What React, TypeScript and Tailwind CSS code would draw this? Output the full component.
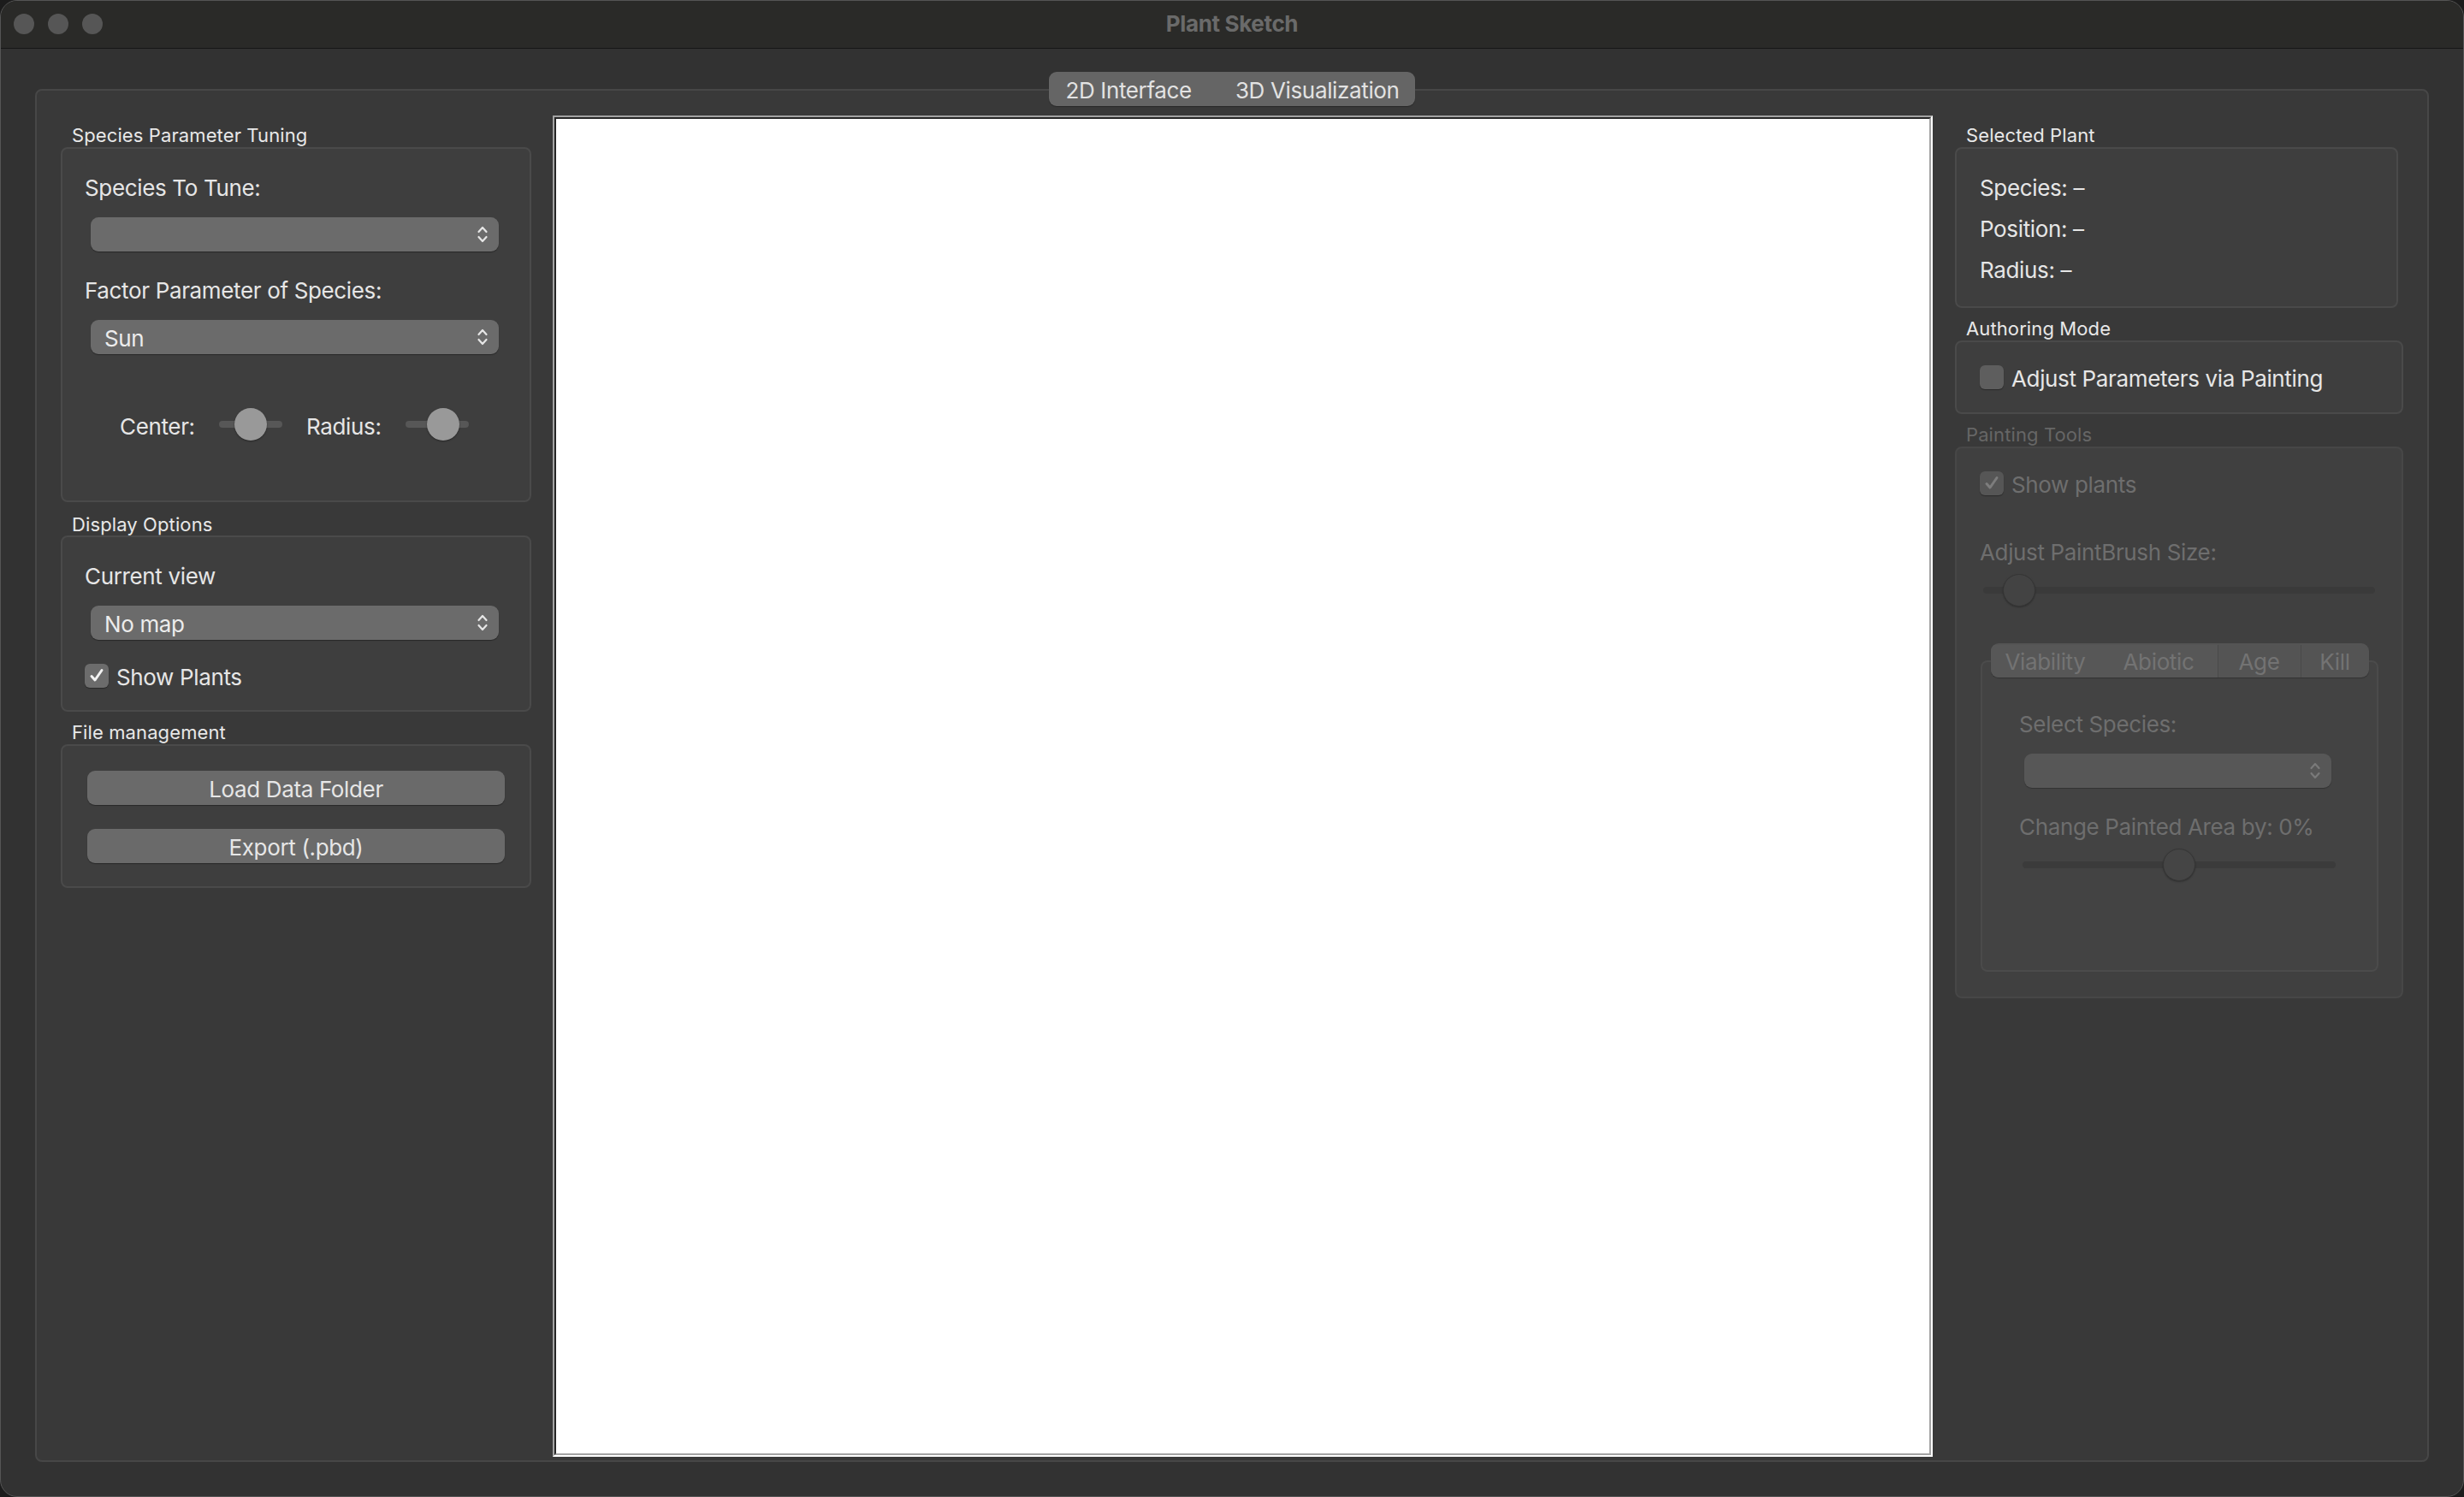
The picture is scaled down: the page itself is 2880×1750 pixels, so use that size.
import React from "react";

function Chevrons({ dim }: { dim?: boolean }) {
    return (
        <svg width="14" height="26" viewBox="0 0 14 26" fill="none">
            <path
                d="M2.5 10 L7 5 L11.5 10"
                stroke={dim ? "#7a7a7a" : "#e6e6e6"}
                strokeWidth="2.2"
                strokeLinecap="round"
                strokeLinejoin="round"
            />
            <path
                d="M2.5 16 L7 21 L11.5 16"
                stroke={dim ? "#7a7a7a" : "#e6e6e6"}
                strokeWidth="2.2"
                strokeLinecap="round"
                strokeLinejoin="round"
            />
        </svg>
    );
}

function Combo({
    value,
    className = "",
    disabled,
}: {
    value?: string;
    className?: string;
    disabled?: boolean;
}) {
    return (
        <div
            className={`flex h-[40px] items-center justify-between rounded-[9px] pl-[16px] pr-[12px] ${
                disabled
                    ? "bg-[#575757] shadow-[0_1px_1px_rgba(0,0,0,0.25)]"
                    : "bg-[#6b6b6b] shadow-[0_1px_1px_rgba(0,0,0,0.35)]"
            } ${className}`}
        >
            <span className="pt-[3px] text-[26px] leading-none text-[#ececec]">
                {value}
            </span>
            <Chevrons dim={disabled} />
        </div>
    );
}

function Checkbox({
    checked,
    disabled,
}: {
    checked?: boolean;
    disabled?: boolean;
}) {
    const bg = disabled
        ? "bg-[#565656]"
        : checked
          ? "bg-[#6c6c6c]"
          : "bg-[#5e5e5e]";
    return (
        <div
            className={`flex h-[28px] w-[28px] shrink-0 items-center justify-center rounded-[6px] ${bg} shadow-[0_1px_1px_rgba(0,0,0,0.35)]`}
        >
            {checked && (
                <svg width="20" height="20" viewBox="0 0 20 20" fill="none">
                    <path
                        d="M4 10.5 L8 15 L16 3.5"
                        stroke={disabled ? "#7d7d7d" : "#f2f2f2"}
                        strokeWidth="3"
                        strokeLinecap="round"
                        strokeLinejoin="round"
                    />
                </svg>
            )}
        </div>
    );
}

function GroupTitle({
    children,
    dim,
    className = "",
}: {
    children: React.ReactNode;
    dim?: boolean;
    className?: string;
}) {
    return (
        <div
            className={`h-[28px] pl-[13px] text-[22px] leading-[32px] tracking-[0.005em] ${
                dim ? "text-[#666666]" : "text-[#e8e8e8]"
            } ${className}`}
        >
            {children}
        </div>
    );
}

function Label({
    children,
    dim,
    className = "",
}: {
    children: React.ReactNode;
    dim?: boolean;
    className?: string;
}) {
    return (
        <div
            className={`h-[32px] text-[26px] leading-[35px] ${
                dim ? "text-[#6e6e6e]" : "text-[#e6e6e6]"
            } ${className}`}
        >
            {children}
        </div>
    );
}

function PushButton({ children }: { children: React.ReactNode }) {
    return (
        <div className="ml-[3px] flex h-[40px] w-[488px] items-center justify-center rounded-[9px] bg-[#6a6a6a] pt-[2px] text-[26px] text-[#e6e6e6] shadow-[0_1px_1px_rgba(0,0,0,0.35)]">
            {children}
        </div>
    );
}

export default function App() {
    return (
        <div className="h-[1750px] w-[2880px] bg-[#1c1c1c] [font-family:Inter,'Liberation_Sans',sans-serif] tracking-[-0.022em]">
            <div className="flex h-full w-full flex-col overflow-hidden rounded-[20px] border border-[#555555] bg-[#323232]">
                {/* title bar */}
                <div className="relative flex h-[56px] shrink-0 items-center justify-center border-b border-[#161616] bg-[#2a2a28]">
                    <div className="absolute left-[15px] top-[15px] flex gap-[16px]">
                        <div className="h-[24px] w-[24px] rounded-full bg-[#565656]" />
                        <div className="h-[24px] w-[24px] rounded-full bg-[#565656]" />
                        <div className="h-[24px] w-[24px] rounded-full bg-[#565656]" />
                    </div>
                    <span className="-mt-[2px] text-[26px] font-bold text-[#6a6a6a]">
                        Plant Sketch
                    </span>
                </div>

                {/* tab widget */}
                <div className="flex flex-1 flex-col px-[40px] pb-[40px]">
                    <div className="relative z-10 mt-[27px] flex justify-center">
                        <div className="flex h-[40px] items-center gap-[51px] rounded-[9px] bg-[#656565] pl-[19px] pr-[18px] pt-[2px] text-[26px] text-[#e2e2e2] shadow-[0_1px_1px_rgba(0,0,0,0.3)]">
                            <span>2D Interface</span>
                            <span>3D Visualization</span>
                        </div>
                    </div>
                    <div className="-mt-[20px] flex flex-1 items-start rounded-[8px] border-2 border-[#474747] bg-[#393939] pl-[28px] pr-[29px] pt-[29px] pb-[4px]">
                        {/* left column */}
                        <div className="flex w-[550px] shrink-0 flex-col">
                            <GroupTitle className="mt-[7px]">
                                Species Parameter Tuning
                            </GroupTitle>
                            <div className="mt-[2px] flex h-[415px] flex-col rounded-[8px] border-2 border-[#4a4a4a] bg-[#3e3e3e] pl-[26px] pt-[28px]">
                                <Label>Species To Tune:</Label>
                                <Combo className="ml-[7px] mt-[20px] w-[477px]" />
                                <Label className="mt-[28px]">
                                    Factor Parameter of Species:
                                </Label>
                                <Combo
                                    value="Sun"
                                    className="ml-[7px] mt-[20px] w-[477px]"
                                />
                                <div className="ml-[41px] mt-[62px] flex h-[40px] items-center text-[26px] text-[#e6e6e6]">
                                    <span className="w-[116px] pt-[4px]">
                                        Center:
                                    </span>
                                    <div className="relative flex h-[40px] w-[74px] items-center">
                                        <div className="h-[8px] w-full rounded-full bg-[#575757]" />
                                        <div className="absolute left-[18px] top-[1px] h-[38px] w-[38px] rounded-full bg-[#999999] shadow-[0_1px_2px_rgba(0,0,0,0.4)]" />
                                    </div>
                                    <span className="ml-[28px] w-[116px] pt-[4px]">
                                        Radius:
                                    </span>
                                    <div className="relative flex h-[40px] w-[74px] items-center">
                                        <div className="h-[8px] w-full rounded-full bg-[#575757]" />
                                        <div className="absolute left-[25px] top-[1px] h-[38px] w-[38px] rounded-full bg-[#999999] shadow-[0_1px_2px_rgba(0,0,0,0.4)]" />
                                    </div>
                                </div>
                            </div>

                            <GroupTitle className="mt-[10px]">
                                Display Options
                            </GroupTitle>
                            <div className="mt-[1px] flex h-[206px] flex-col rounded-[8px] border-2 border-[#4a4a4a] bg-[#3e3e3e] pl-[26px] pt-[28px]">
                                <Label>Current view</Label>
                                <Combo
                                    value="No map"
                                    className="ml-[7px] mt-[20px] w-[477px]"
                                />
                                <div className="mt-[28px] flex h-[28px] items-center gap-[9px] text-[26px] text-[#e6e6e6]">
                                    <Checkbox checked />
                                    <span className="pt-[3px]">
                                        Show Plants
                                    </span>
                                </div>
                            </div>

                            <GroupTitle className="mt-[8px]">
                                File management
                            </GroupTitle>
                            <div className="mt-[2px] flex h-[168px] flex-col rounded-[8px] border-2 border-[#4a4a4a] bg-[#3e3e3e] pl-[26px] pt-[29px]">
                                <PushButton>Load Data Folder</PushButton>
                                <div className="mt-[28px]">
                                    <PushButton>Export (.pbd)</PushButton>
                                </div>
                            </div>
                        </div>

                        {/* canvas */}
                        <div className="ml-[25px] flex w-[1613px] shrink-0 self-stretch border-2 border-b-white border-l-[#a3a3a3] border-r-white border-t-[#a3a3a3]">
                            <div className="flex-1 border-2 border-b-[#a3a3a3] border-l-[#262626] border-r-[#a3a3a3] border-t-[#262626] bg-white" />
                        </div>

                        {/* right column */}
                        <div className="ml-[26px] flex w-[524px] shrink-0 flex-col">
                            <GroupTitle className="mt-[7px]">
                                Selected Plant
                            </GroupTitle>
                            <div className="mt-[2px] flex h-[188px] w-[518px] flex-col gap-[16px] rounded-[8px] border-2 border-[#4a4a4a] bg-[#3e3e3e] pl-[27px] pt-[28px]">
                                <Label>Species: –</Label>
                                <Label>Position: –</Label>
                                <Label>Radius: –</Label>
                            </div>

                            <GroupTitle className="mt-[8px]">
                                Authoring Mode
                            </GroupTitle>
                            <div className="mt-[2px] flex h-[86px] flex-col rounded-[8px] border-2 border-[#4a4a4a] bg-[#3e3e3e] pl-[27px] pt-[27px]">
                                <div className="flex h-[28px] items-center gap-[9px] text-[26px] text-[#e6e6e6]">
                                    <Checkbox />
                                    <span className="pt-[3px]">
                                        Adjust Parameters via Painting
                                    </span>
                                </div>
                            </div>

                            <GroupTitle dim className="mt-[8px]">
                                Painting Tools
                            </GroupTitle>
                            <div className="mt-[2px] flex h-[645px] flex-col rounded-[8px] border-2 border-[#474747] bg-[#404040] pl-[27px] pt-[27px]">
                                <div className="flex h-[28px] items-center gap-[9px] text-[26px] text-[#6e6e6e]">
                                    <Checkbox checked disabled />
                                    <span className="pt-[3px]">Show plants</span>
                                </div>
                                <Label dim className="mt-[49px]">
                                    Adjust PaintBrush Size:
                                </Label>
                                <div className="relative ml-[4px] mt-[10px] flex h-[40px] w-[458px] items-center">
                                    <div className="h-[8px] w-full rounded-full bg-[#3a3a3a]" />
                                    <div className="absolute left-[23px] top-[1px] h-[38px] w-[38px] rounded-full border border-[#363636] bg-[#434343] shadow-[0_1px_2px_rgba(0,0,0,0.3)]" />
                                </div>

                                {/* tab pane */}
                                <div className="ml-[1px] mt-[42px] flex w-[465px] flex-col">
                                    <div className="relative z-10 flex justify-center">
                                        <div className="flex h-[40px] w-[442px] items-stretch overflow-hidden rounded-[9px] bg-[#545454] pt-[2px] text-[26px] text-[#737373] shadow-[0_1px_1px_rgba(0,0,0,0.25)]">
                                            <div className="flex w-[128px] items-center justify-center bg-[#575757]">
                                                Viability
                                            </div>
                                            <div className="flex w-[137px] items-center justify-center bg-[#575757]">
                                                Abiotic
                                            </div>
                                            <div className="flex w-[97px] items-center justify-center border-l border-[#4a4a4a]">
                                                Age
                                            </div>
                                            <div className="flex w-[80px] items-center justify-center border-l border-[#4a4a4a]">
                                                Kill
                                            </div>
                                        </div>
                                    </div>
                                    <div className="-mt-[20px] flex h-[364px] flex-col rounded-[8px] border-2 border-[#4b4b4b] bg-[#434343] pl-[43px] pt-[55px]">
                                        <Label dim>Select Species:</Label>
                                        <Combo
                                            disabled
                                            className="ml-[6px] mt-[20px] w-[359px]"
                                        />
                                        <Label dim className="mt-[28px]">
                                            Change Painted Area by: 0%
                                        </Label>
                                        <div className="relative ml-[4px] mt-[10px] flex h-[40px] w-[366px] items-center">
                                            <div className="h-[8px] w-full rounded-full bg-[#3b3b3b]" />
                                            <div className="absolute left-[164px] top-[1px] h-[38px] w-[38px] rounded-full border border-[#363636] bg-[#454545] shadow-[0_1px_2px_rgba(0,0,0,0.3)]" />
                                        </div>
                                    </div>
                                </div>
                            </div>
                        </div>
                    </div>
                </div>
            </div>
        </div>
    );
}
